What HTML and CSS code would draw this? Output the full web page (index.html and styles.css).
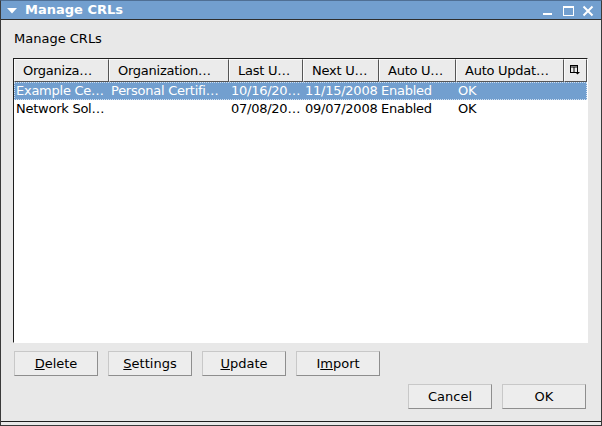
FILE: index.html
```html
<!DOCTYPE html>
<html>
<head>
    <title>Manage CRLs</title>
    <link rel="stylesheet" href="styles.css">
</head>
<body>
    <div class="window">
        <div class="titleBar">
            <svg class="menuArrow" width="10" height="6" viewBox="0 0 10 6"><polygon points="0,0 10,0 5,5.5" fill="#fff"/></svg>
            <span class="titleText">Manage CRLs</span>
            <svg class="titleButtons" width="60" height="18" viewBox="0 0 60 18">
                <rect x="2" y="12" width="9" height="2" fill="#fff"/>
                <rect x="22.5" y="5.5" width="10" height="9" fill="none" stroke="#fff"/>
                <line x1="22" y1="6.5" x2="33" y2="6.5" stroke="#fff"/>
                <path d="M42.5 5.5 L51.5 14.5 M51.5 5.5 L42.5 14.5" stroke="#fff" stroke-width="2"/>
            </svg>
        </div>
        <div class="content">
            <div class="caption">Manage CRLs</div>
            <div class="listFrame">
                <div class="listRow listHeader">
                    <div class="headCell">Organiza…</div>
                    <div class="headCell">Organization…</div>
                    <div class="headCell">Last U…</div>
                    <div class="headCell">Next U…</div>
                    <div class="headCell">Auto U…</div>
                    <div class="headCell">Auto Updat…</div>
                    <div class="headCell colPicker">
                        <svg width="10" height="10" viewBox="0 0 10 10">
                            <rect x="0.5" y="0.5" width="7" height="7" fill="none" stroke="#000"/>
                            <line x1="0" y1="2" x2="8" y2="2" stroke="#000"/>
                            <line x1="4" y1="2" x2="4" y2="8" stroke="#000"/>
                            <polygon points="5,7 10,7 7.5,9.5" fill="#000"/>
                        </svg>
                    </div>
                </div>
                <div class="listRow dataRow selected">
                    <div class="cell">Example Ce…</div>
                    <div class="cell">Personal Certifi…</div>
                    <div class="cell">10/16/20…</div>
                    <div class="cell">11/15/2008</div>
                    <div class="cell">Enabled</div>
                    <div class="cell">OK</div>
                    <div class="cell"></div>
                </div>
                <div class="listRow dataRow">
                    <div class="cell">Network Sol…</div>
                    <div class="cell"></div>
                    <div class="cell">07/08/20…</div>
                    <div class="cell">09/07/2008</div>
                    <div class="cell">Enabled</div>
                    <div class="cell">OK</div>
                    <div class="cell"></div>
                </div>
            </div>
            <div class="actions">
                <button class="btn"><u>D</u>elete</button>
                <button class="btn"><u>S</u>ettings</button>
                <button class="btn"><u>U</u>pdate</button>
                <button class="btn">I<u>m</u>port</button>
            </div>
            <div class="dialogButtons">
                <button class="btn">Cancel</button>
                <button class="btn">OK</button>
            </div>
        </div>
    </div>
</body>
</html>
```

FILE: styles.css
```css
* {
    box-sizing: border-box;
}

body {
    margin: 0;
    padding: 0;
    font-family: "DejaVu Sans", Verdana, sans-serif;
    font-size: 13px;
    color: #000;
}

.window {
    width: 602px;
    height: 426px;
    border: 1px solid #3a3a3a;
    border-top-color: #4f6f94;
    background-color: #e8e8e8;
    box-shadow: inset 0 -3px 0 #e8e8e8, inset 0 -4px 0 #1e1e1e;
}

.titleBar {
    display: flex;
    align-items: center;
    height: 19px;
    background-color: #729fcf;
    border-bottom: 1px solid #2e2e2e;
    color: #fff;
}

.menuArrow {
    margin-left: 6px;
    margin-top: 1px;
}

.titleText {
    margin-left: 8px;
    font-weight: bold;
    line-height: 18px;
}

.titleButtons {
    margin-left: auto;
    align-self: flex-start;
}

.content {
    padding: 11px 13px 0 12px;
}

.caption {
    line-height: 15px;
    margin-left: 1px;
}

.listFrame {
    margin-top: 12px;
    height: 285px;
    border: 1px solid #fff;
    border-top-color: #1e1e1e;
    border-left-color: #1e1e1e;
    background-color: #fff;
}

.listRow {
    display: grid;
    grid-template-columns: 95px 120px 74px 76px 77px 108px 1fr;
    white-space: nowrap;
    letter-spacing: -0.25px;
}

.headCell {
    height: 23px;
    line-height: 21px;
    padding-left: 8px;
    background-color: #ebebeb;
    border-top: 1px solid #fafafa;
    border-left: 1px solid #fafafa;
    border-right: 1px solid #555;
    border-bottom: 1px solid #555;
    overflow: hidden;
}

.colPicker {
    padding-left: 5px;
    padding-top: 5px;
    line-height: 0;
}

.dataRow {
    height: 18px;
    line-height: 18px;
}

.cell {
    padding-left: 2px;
}

.selected {
    background-color: #729fcf;
    color: #fff;
    outline: 1px dotted #d4e2f2;
    outline-offset: -1px;
}

.actions {
    display: flex;
    gap: 10px;
    margin-top: 8px;
    padding-left: 1px;
}

.dialogButtons {
    display: flex;
    justify-content: flex-end;
    gap: 10px;
    margin-top: 8px;
    padding-right: 2px;
}

.btn {
    width: 84px;
    height: 25px;
    padding: 0;
    font-family: inherit;
    font-size: 13px;
    color: #000;
    background-color: #ededed;
    border: 1px solid;
    border-color: #c8c8c8 #8e8e8e #8e8e8e #c8c8c8;
    border-radius: 0;
}
```
